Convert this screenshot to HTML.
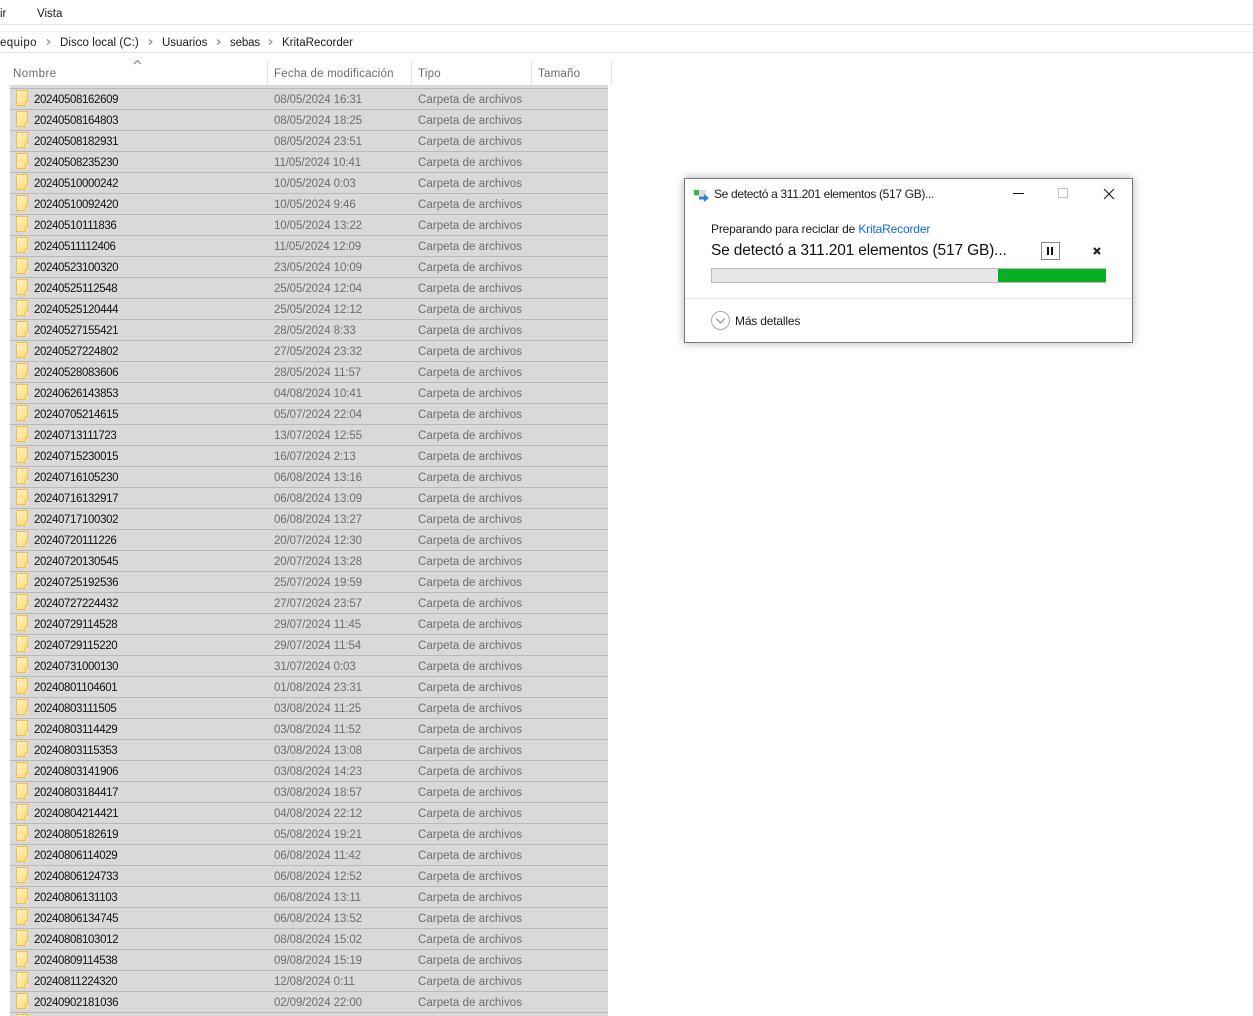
<!DOCTYPE html>
<html><head><meta charset="utf-8"><style>
html,body{margin:0;padding:0;background:#fff;width:1253px;height:1016px;overflow:hidden;font-family:"Liberation Sans",sans-serif;font-size:11.5px;color:#1a1a1a}
#w{position:absolute;left:0;top:0;width:1253px;height:1016px;overflow:hidden}
.a{position:absolute;white-space:nowrap}
.l{position:absolute;background:#e3e3e3}
.h{position:absolute;top:68px;color:#6a6a6a;white-space:nowrap;letter-spacing:.22px}
.s{position:absolute;top:60px;width:1px;height:25px;background:#e5e5e5}
.r{position:absolute;left:10px;width:598px;height:20px;background:#d9d9d9;border-top:1px solid #b9b9b9}
.r i{position:absolute;left:6px;top:1px;width:10px;height:14px;border:1px solid #eac04f;background:linear-gradient(135deg,#fff0bd,#fcdc80)}
.r i:after{content:"";position:absolute;right:-1px;bottom:-1px;width:2px;height:4px;border:1px solid #eac04f;border-width:1px 0 0 1px;background:#fbe7a8}
.r b,.r u,.r s{position:absolute;top:5px;font-weight:normal;text-decoration:none;white-space:nowrap}
.r b{left:24px;color:#111;letter-spacing:-.39px}
.r u{left:264px;color:#6d6d6d;letter-spacing:-.1px}
.r s{left:408px;color:#6d6d6d;letter-spacing:.06px}
</style></head><body><div id="w">
<div class="a" style="left:0;top:8px">ir</div><div class="a" style="left:37px;top:8px">Vista</div>
<div class="l" style="left:0;top:24px;width:1253px;height:1px"></div>
<div class="l" style="left:0;top:31px;width:1253px;height:1px;background:#efefef"></div>
<div class="l" style="left:0;top:52px;width:1253px;height:1px"></div>
<div class="a" style="left:0;top:37px;letter-spacing:.4px">equipo</div>
<div class="a" style="left:60px;top:37px;letter-spacing:.05px">Disco local (C:)</div>
<div class="a" style="left:162px;top:37px">Usuarios</div>
<div class="a" style="left:230px;top:37px;letter-spacing:-.15px">sebas</div>
<div class="a" style="left:282px;top:37px">KritaRecorder</div>
<svg class="a" style="left:0;top:0" width="300" height="72" fill="none" stroke="#8a8a8a" stroke-width="1.2"><path d="M47 39.500l3 2.500-3 2.500M149 39.500l3 2.500-3 2.500M217 39.500l3 2.500-3 2.500M269 39.500l3 2.500-3 2.500"/><path d="M134 64l3.500-3.500 3.500 3.500" stroke="#888"/></svg>
<div class="h" style="left:13px;letter-spacing:.45px">Nombre</div><div class="h" style="left:274px">Fecha de modificación</div><div class="h" style="left:418px">Tipo</div><div class="h" style="left:538px">Tamaño</div>
<div class="s" style="left:267px"></div><div class="s" style="left:411px"></div><div class="s" style="left:531px"></div><div class="s" style="left:611px"></div>
<div class="a" style="left:10px;top:85px;width:598px;height:3px;background:#d9d9d9"></div>
<div class="r" style="top:88px"><i></i><b>20240508162609</b><u>08/05/2024 16:31</u><s>Carpeta de archivos</s></div>
<div class="r" style="top:109px"><i></i><b>20240508164803</b><u>08/05/2024 18:25</u><s>Carpeta de archivos</s></div>
<div class="r" style="top:130px"><i></i><b>20240508182931</b><u>08/05/2024 23:51</u><s>Carpeta de archivos</s></div>
<div class="r" style="top:151px"><i></i><b>20240508235230</b><u>11/05/2024 10:41</u><s>Carpeta de archivos</s></div>
<div class="r" style="top:172px"><i></i><b>20240510000242</b><u>10/05/2024 0:03</u><s>Carpeta de archivos</s></div>
<div class="r" style="top:193px"><i></i><b>20240510092420</b><u>10/05/2024 9:46</u><s>Carpeta de archivos</s></div>
<div class="r" style="top:214px"><i></i><b>20240510111836</b><u>10/05/2024 13:22</u><s>Carpeta de archivos</s></div>
<div class="r" style="top:235px"><i></i><b>20240511112406</b><u>11/05/2024 12:09</u><s>Carpeta de archivos</s></div>
<div class="r" style="top:256px"><i></i><b>20240523100320</b><u>23/05/2024 10:09</u><s>Carpeta de archivos</s></div>
<div class="r" style="top:277px"><i></i><b>20240525112548</b><u>25/05/2024 12:04</u><s>Carpeta de archivos</s></div>
<div class="r" style="top:298px"><i></i><b>20240525120444</b><u>25/05/2024 12:12</u><s>Carpeta de archivos</s></div>
<div class="r" style="top:319px"><i></i><b>20240527155421</b><u>28/05/2024 8:33</u><s>Carpeta de archivos</s></div>
<div class="r" style="top:340px"><i></i><b>20240527224802</b><u>27/05/2024 23:32</u><s>Carpeta de archivos</s></div>
<div class="r" style="top:361px"><i></i><b>20240528083606</b><u>28/05/2024 11:57</u><s>Carpeta de archivos</s></div>
<div class="r" style="top:382px"><i></i><b>20240626143853</b><u>04/08/2024 10:41</u><s>Carpeta de archivos</s></div>
<div class="r" style="top:403px"><i></i><b>20240705214615</b><u>05/07/2024 22:04</u><s>Carpeta de archivos</s></div>
<div class="r" style="top:424px"><i></i><b>20240713111723</b><u>13/07/2024 12:55</u><s>Carpeta de archivos</s></div>
<div class="r" style="top:445px"><i></i><b>20240715230015</b><u>16/07/2024 2:13</u><s>Carpeta de archivos</s></div>
<div class="r" style="top:466px"><i></i><b>20240716105230</b><u>06/08/2024 13:16</u><s>Carpeta de archivos</s></div>
<div class="r" style="top:487px"><i></i><b>20240716132917</b><u>06/08/2024 13:09</u><s>Carpeta de archivos</s></div>
<div class="r" style="top:508px"><i></i><b>20240717100302</b><u>06/08/2024 13:27</u><s>Carpeta de archivos</s></div>
<div class="r" style="top:529px"><i></i><b>20240720111226</b><u>20/07/2024 12:30</u><s>Carpeta de archivos</s></div>
<div class="r" style="top:550px"><i></i><b>20240720130545</b><u>20/07/2024 13:28</u><s>Carpeta de archivos</s></div>
<div class="r" style="top:571px"><i></i><b>20240725192536</b><u>25/07/2024 19:59</u><s>Carpeta de archivos</s></div>
<div class="r" style="top:592px"><i></i><b>20240727224432</b><u>27/07/2024 23:57</u><s>Carpeta de archivos</s></div>
<div class="r" style="top:613px"><i></i><b>20240729114528</b><u>29/07/2024 11:45</u><s>Carpeta de archivos</s></div>
<div class="r" style="top:634px"><i></i><b>20240729115220</b><u>29/07/2024 11:54</u><s>Carpeta de archivos</s></div>
<div class="r" style="top:655px"><i></i><b>20240731000130</b><u>31/07/2024 0:03</u><s>Carpeta de archivos</s></div>
<div class="r" style="top:676px"><i></i><b>20240801104601</b><u>01/08/2024 23:31</u><s>Carpeta de archivos</s></div>
<div class="r" style="top:697px"><i></i><b>20240803111505</b><u>03/08/2024 11:25</u><s>Carpeta de archivos</s></div>
<div class="r" style="top:718px"><i></i><b>20240803114429</b><u>03/08/2024 11:52</u><s>Carpeta de archivos</s></div>
<div class="r" style="top:739px"><i></i><b>20240803115353</b><u>03/08/2024 13:08</u><s>Carpeta de archivos</s></div>
<div class="r" style="top:760px"><i></i><b>20240803141906</b><u>03/08/2024 14:23</u><s>Carpeta de archivos</s></div>
<div class="r" style="top:781px"><i></i><b>20240803184417</b><u>03/08/2024 18:57</u><s>Carpeta de archivos</s></div>
<div class="r" style="top:802px"><i></i><b>20240804214421</b><u>04/08/2024 22:12</u><s>Carpeta de archivos</s></div>
<div class="r" style="top:823px"><i></i><b>20240805182619</b><u>05/08/2024 19:21</u><s>Carpeta de archivos</s></div>
<div class="r" style="top:844px"><i></i><b>20240806114029</b><u>06/08/2024 11:42</u><s>Carpeta de archivos</s></div>
<div class="r" style="top:865px"><i></i><b>20240806124733</b><u>06/08/2024 12:52</u><s>Carpeta de archivos</s></div>
<div class="r" style="top:886px"><i></i><b>20240806131103</b><u>06/08/2024 13:11</u><s>Carpeta de archivos</s></div>
<div class="r" style="top:907px"><i></i><b>20240806134745</b><u>06/08/2024 13:52</u><s>Carpeta de archivos</s></div>
<div class="r" style="top:928px"><i></i><b>20240808103012</b><u>08/08/2024 15:02</u><s>Carpeta de archivos</s></div>
<div class="r" style="top:949px"><i></i><b>20240809114538</b><u>09/08/2024 15:19</u><s>Carpeta de archivos</s></div>
<div class="r" style="top:970px"><i></i><b>20240811224320</b><u>12/08/2024 0:11</u><s>Carpeta de archivos</s></div>
<div class="r" style="top:991px"><i></i><b>20240902181036</b><u>02/09/2024 22:00</u><s>Carpeta de archivos</s></div>
<div class="r" style="top:1012px"><i></i></div>
<div class="a" style="left:684px;top:178px;width:447px;height:163px;background:#fff;border:1px solid #777;box-shadow:0 0 9px rgba(0,0,0,.3)"></div>
<svg class="a" style="left:684px;top:178px" width="449" height="165" fill="none">
<rect x="10" y="12" width="12" height="6" fill="#dcdcdc"/><rect x="10" y="12" width="5" height="5" fill="#3cb54a"/>
<path d="M15 18.500h5v-2.500l5 4-5 4v-2.500h-5z" fill="#2f80d8"/>
<path d="M329 15.500h11" stroke="#111" stroke-width="1"/>
<rect x="374.500" y="10.500" width="9" height="9" stroke="#c4c4c4"/>
<path d="M420 11l10 10M430 11l-10 10" stroke="#111" stroke-width="1"/>
<rect x="357.500" y="64.500" width="18" height="17" stroke="#111" stroke-dasharray="1 1" shape-rendering="crispEdges"/>
<path d="M364 69v8M368 69v8" stroke="#111" stroke-width="2"/>
<path d="M410 70l6 6M416 70l-6 6" stroke="#222" stroke-width="2.200"/>
<circle cx="36.500" cy="142.500" r="9" stroke="#a8a8a8"/>
<path d="M32 140.500l4.500 4.500 4.500-4.500" stroke="#888"/>
</svg>
<div class="a" style="left:714px;top:187px;font-size:12px;letter-spacing:-.33px">Se detectó a 311.201 elementos (517 GB)...</div>
<div class="a" style="left:711px;top:222px;font-size:12px;letter-spacing:-.17px">Preparando para reciclar de <span style="color:#0f6fd0">KritaRecorder</span></div>
<div class="a" style="left:711px;top:242px;font-size:15.5px;letter-spacing:-.155px;color:#111">Se detectó a 311.201 elementos (517 GB)...</div>
<div class="a" style="left:711px;top:268px;width:393px;height:13px;background:#e6e6e6;border:1px solid #bcbcbc"></div>
<div class="a" style="left:998px;top:269px;width:108px;height:13px;background:#06b025"></div>
<div class="l" style="left:685px;top:298px;width:447px;height:1px"></div>
<div class="a" style="left:735px;top:314px;font-size:12px;letter-spacing:-.18px">Más detalles</div>
</div></body></html>
